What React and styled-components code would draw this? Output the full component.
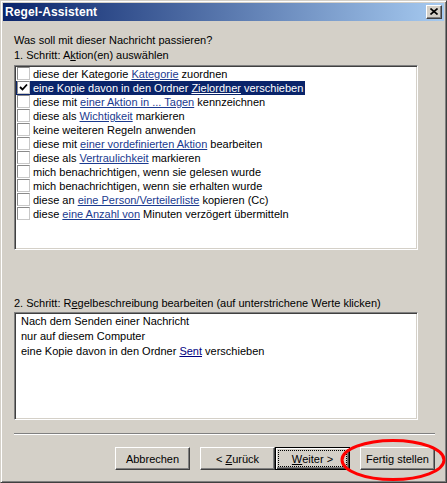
import styled, {createGlobalStyle} from 'styled-components'

const GlobalStyle = createGlobalStyle`
  html, body {
    margin: 0;
    padding: 0;
    background: #d4d0c8;
  }
  * {
    box-sizing: border-box;
  }
`

const FONT = '"Liberation Sans", Arial, sans-serif'

const actions = [
  {parts: ['diese der Kategorie ', {link: 'Kategorie'}, ' zuordnen']},
  {parts: ['eine Kopie davon in den Ordner ', {link: 'Zielordner'}, ' verschieben'], checked: true, selected: true},
  {parts: ['diese mit ', {link: 'einer Aktion in ... Tagen'}, ' kennzeichnen']},
  {parts: ['diese als ', {link: 'Wichtigkeit'}, ' markieren']},
  {parts: ['keine weiteren Regeln anwenden']},
  {parts: ['diese mit ', {link: 'einer vordefinierten Aktion'}, ' bearbeiten']},
  {parts: ['diese als ', {link: 'Vertraulichkeit'}, ' markieren']},
  {parts: ['mich benachrichtigen, wenn sie gelesen wurde']},
  {parts: ['mich benachrichtigen, wenn sie erhalten wurde']},
  {parts: ['diese an ', {link: 'eine Person/Verteilerliste'}, ' kopieren (Cc)']},
  {parts: ['diese ', {link: 'eine Anzahl von'}, ' Minuten verzögert übermitteln']},
]

const Window = styled.div`
  position: relative;
  width: 447px;
  height: 483px;
  display: flex;
  flex-direction: column;
  padding: 2px;
  border: 1px solid;
  border-color: #d4d0c8 #404040 #404040 #d4d0c8;
  box-shadow: inset 1px 1px #ffffff, inset -1px -1px #808080;
  background: #d4d0c8;
  font-family: ${FONT};
  font-size: 11px;
  color: #000;
`

const TitleBar = styled.div`
  height: 18px;
  display: flex;
  align-items: center;
  justify-content: space-between;
  padding: 0 2px 0 2px;
  background: linear-gradient(to right, #0a246a, #a6caf0);
`

const Title = styled.span`
  color: #fff;
  font-weight: bold;
  font-size: 12px;
  letter-spacing: 0.1px;
`

const CloseButton = styled.div`
  width: 16px;
  height: 14px;
  display: flex;
  align-items: center;
  justify-content: center;
  background: #d4d0c8;
  border: 1px solid;
  border-color: #ffffff #404040 #404040 #ffffff;
  box-shadow: inset -1px -1px #808080;
  padding-bottom: 1px;
`

const Body = styled.div`
  flex: 1;
  display: flex;
  flex-direction: column;
  padding: 13px 9px 0 11px;
`

const Label = styled.div`
  height: 13px;
  line-height: 13px;
  margin-top: ${p => p.$gap || 0}px;
  white-space: nowrap;
`

const Accel = styled.span`
  text-decoration: underline;
`

const Sunken = styled.div`
  width: 404px;
  height: ${p => p.$h}px;
  margin-top: ${p => p.$gap}px;
  background: #fff;
  border: 1px solid;
  border-color: #808080 #ffffff #ffffff #808080;
  box-shadow: inset 1px 1px #404040, inset -1px -1px #d4d0c8;
  padding: ${p => p.$pad};
`

const ActionRow = styled.div`
  height: 14px;
  display: flex;
`

const ActionItem = styled.div`
  display: flex;
  align-items: flex-start;
  height: 14px;
  padding: 0 2px 0 1px;
  background: ${p => (p.$selected ? '#0a246a' : 'transparent')};
  color: ${p => (p.$selected ? '#fff' : '#000')};
`

const CheckBox = styled.span`
  width: 13px;
  height: 13px;
  flex: none;
  display: flex;
  align-items: center;
  justify-content: center;
  margin-right: 3px;
  background: #fff;
  border: 1px solid;
  border-color: #8a8a8a #c8c8c8 #c8c8c8 #8a8a8a;
`

const ItemText = styled.span`
  line-height: 14px;
  white-space: nowrap;
`

const Link = styled.span`
  color: ${p => (p.$selected ? '#fff' : '#1a3a8f')};
  text-decoration: underline;
`

const DescLine = styled.div`
  line-height: 15px;
  white-space: nowrap;
`

const DescLink = styled.span`
  color: #000080;
  text-decoration: underline;
`

const Separator = styled.div`
  margin-top: 13px;
  height: 2px;
  border-top: 1px solid #808080;
  border-bottom: 1px solid #ffffff;
`

const ButtonRow = styled.div`
  margin-top: 12px;
  display: flex;
  justify-content: flex-end;
`

const Button = styled.div`
  width: 75px;
  height: 23px;
  display: flex;
  align-items: center;
  justify-content: center;
  margin-left: ${p => p.$gap}px;
  background: #d4d0c8;
  border: 1px solid;
  border-color: ${p => (p.$default ? '#000' : '#ffffff #404040 #404040 #ffffff')};
  box-shadow: ${p =>
    p.$default
      ? 'inset 1px 1px #ffffff, inset -1px -1px #404040, inset -2px -2px #808080'
      : 'inset -1px -1px #808080'};
  outline: ${p => (p.$default ? '1px dotted #000' : 'none')};
  outline-offset: -4px;
  white-space: nowrap;
`

const Annotation = styled.svg`
  position: absolute;
  left: 0;
  top: 0;
  pointer-events: none;
`

const Check = () => (
  <svg width="9" height="9" viewBox="0 0 9 9">
    <path d="M1 4 L3.5 6.5 L8 1.5" fill="none" stroke="#000" strokeWidth="1.8" />
  </svg>
)

const CloseGlyph = () => (
  <svg width="8" height="7" viewBox="0 0 8 7">
    <path d="M0.5 0.5 L7.5 6.5 M7.5 0.5 L0.5 6.5" stroke="#000" strokeWidth="1.6" />
  </svg>
)

const renderParts = (parts, selected) =>
  parts.map((part, i) =>
    typeof part === 'string' ? (
      <span key={i}>{part}</span>
    ) : (
      <Link key={i} $selected={selected}>
        {part.link}
      </Link>
    ),
  )

const App = () => (
  <>
    <GlobalStyle />
    <Window>
      <TitleBar>
        <Title>Regel-Assistent</Title>
        <CloseButton>
          <CloseGlyph />
        </CloseButton>
      </TitleBar>

      <Body>
        <Label>Was soll mit dieser Nachricht passieren?</Label>
        <Label $gap={2}>
          1. Schritt: A<Accel>k</Accel>tion(en) auswählen
        </Label>

        <Sunken $h={185} $gap={3} $pad="1px 1px">
          {actions.map((action, i) => (
            <ActionRow key={i}>
              <ActionItem $selected={action.selected}>
                <CheckBox>{action.checked && <Check />}</CheckBox>
                <ItemText>{renderParts(action.parts, action.selected)}</ItemText>
              </ActionItem>
            </ActionRow>
          ))}
        </Sunken>

        <Label $gap={47}>
          2. Schritt: R<Accel>e</Accel>gelbeschreibung bearbeiten (auf unterstrichene Werte klicken)
        </Label>

        <Sunken $h={108} $gap={2} $pad="1px 6px">
          <DescLine>Nach dem Senden einer Nachricht</DescLine>
          <DescLine>nur auf diesem Computer</DescLine>
          <DescLine>
            eine Kopie davon in den Ordner <DescLink>Sent</DescLink> verschieben
          </DescLine>
        </Sunken>

        <Separator />

        <ButtonRow>
          <Button $gap={0}>Abbrechen</Button>
          <Button $gap={10}>
            &lt;&nbsp;<Accel>Z</Accel>urück
          </Button>
          <Button $gap={0} $default>
            <Accel>W</Accel>eiter&nbsp;&gt;
          </Button>
          <Button $gap={10}>Fertig stellen</Button>
        </ButtonRow>
      </Body>

      <Annotation width="447" height="483" viewBox="0 0 447 483">
        <ellipse cx="392" cy="459" rx="51" ry="19.5" fill="none" stroke="#ff0000" strokeWidth="3" />
      </Annotation>
    </Window>
  </>
)

export default App
